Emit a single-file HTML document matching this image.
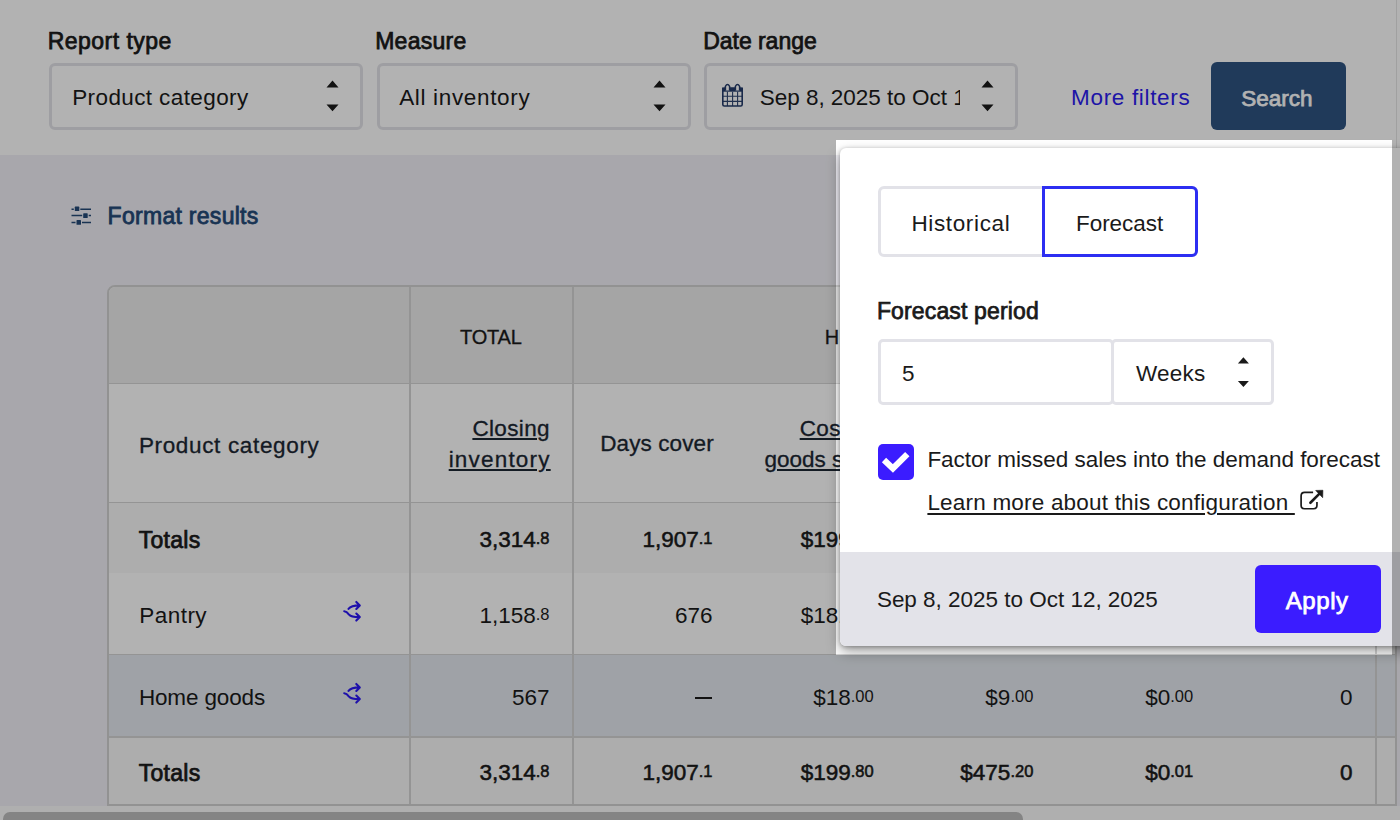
<!DOCTYPE html>
<html><head><meta charset="utf-8"><style>
html,body{margin:0;padding:0;width:1400px;height:820px;overflow:hidden;background:#fff}
body{position:relative;font-family:"Liberation Sans",sans-serif}
.t{position:absolute;white-space:nowrap}
.sel{position:absolute;box-sizing:border-box;border:3px solid #e3e3e8;border-radius:6px;background:#fff}
.num{position:absolute;white-space:nowrap;font-size:22.5px;line-height:22.5px;color:#1a1a1a;text-align:right}
.num .sm{font-size:16.5px;position:relative;top:-3px}
.num.b{-webkit-text-stroke:0.55px #1a1a1a}
.ov{position:absolute;left:836px;top:140px;width:556px;height:515px;box-shadow:0 0 0 2000px rgba(0,0,0,.3);pointer-events:none}
</style></head><body>
<div style="position:absolute;left:0;top:0;width:1400px;height:155px;background:#fff"></div>
<div style="position:absolute;left:1396px;top:0;width:1px;height:155px;background:#e6e6e6"></div>
<div class="t" style="left:47.70px;top:30.03px;font-size:23px;line-height:23px;font-weight:normal;color:#1a1a1a;letter-spacing:0.480px;;-webkit-text-stroke:0.75px #1a1a1a">Report type</div>
<div class="t" style="left:375.20px;top:30.03px;font-size:23px;line-height:23px;font-weight:normal;color:#1a1a1a;letter-spacing:0.250px;;-webkit-text-stroke:0.75px #1a1a1a">Measure</div>
<div class="t" style="left:703.20px;top:30.03px;font-size:23px;line-height:23px;font-weight:normal;color:#1a1a1a;letter-spacing:-0.033px;;-webkit-text-stroke:0.75px #1a1a1a">Date range</div>
<div class="sel" style="left:48.5px;top:62.5px;width:314.5px;height:67.0px"></div>
<div class="sel" style="left:376.5px;top:62.5px;width:314.0px;height:67.0px"></div>
<div class="sel" style="left:703.5px;top:62.5px;width:314.5px;height:67.0px"></div>
<div class="t" style="left:72.20px;top:86.95px;font-size:22.5px;line-height:22.5px;font-weight:normal;color:#1a1a1a;letter-spacing:0.393px;">Product category</div>
<div class="t" style="left:399.20px;top:86.95px;font-size:22.5px;line-height:22.5px;font-weight:normal;color:#1a1a1a;letter-spacing:0.658px;">All inventory</div>
<div style="position:absolute;left:755px;top:80px;width:205px;height:36px;overflow:hidden">
<div class="t" style="left:4.70px;top:6.95px;font-size:22.5px;line-height:22.5px;font-weight:normal;color:#1a1a1a;letter-spacing:-0.019px;">Sep 8, 2025 to Oct 12, 2025</div>
</div>
<svg style="position:absolute;left:0;top:0" width="1400" height="820"><path d="M326.5,87.4 L332.5,80.6 L338.5,87.4 Z M326.5,104.6 L332.5,111.2 L338.5,104.6 Z" fill="#1a1a1a"/></svg>
<svg style="position:absolute;left:0;top:0" width="1400" height="820"><path d="M653.5,87.4 L659.5,80.6 L665.5,87.4 Z M653.5,104.6 L659.5,111.2 L665.5,104.6 Z" fill="#1a1a1a"/></svg>
<svg style="position:absolute;left:0;top:0" width="1400" height="820"><path d="M981.5,87.4 L987.5,80.6 L993.5,87.4 Z M981.5,104.6 L987.5,111.2 L993.5,104.6 Z" fill="#1a1a1a"/></svg>
<svg style="position:absolute;left:720px;top:82px" width="26" height="28" viewBox="0 0 26 28">
<path d="M2.8,14.3 H22.2 M2.8,19.4 H22.2 M7.4,9.7 V24 M12.6,9.7 V24 M17.6,9.7 V24" stroke="#2f4670" stroke-width="1.1" fill="none"/>
<rect x="2.8" y="6.3" width="19.4" height="17.7" rx="1.5" fill="none" stroke="#243c6b" stroke-width="1.6"/>
<rect x="2" y="5.5" width="21" height="4.2" fill="#243c6b"/>
<path d="M5.4,8.5 V4.3 Q7.5,0.8 9.6,4.3 V8.5 M15.4,8.5 V4.3 Q17.5,0.8 19.6,4.3 V8.5" stroke="#243c6b" stroke-width="1.5" fill="#fff"/>
</svg>
<div class="t" style="left:1071.10px;top:87.35px;font-size:22.5px;line-height:22.5px;font-weight:normal;color:#2b1cf0;letter-spacing:0.664px;">More filters</div>
<div style="position:absolute;left:1210.5px;top:62px;width:135px;height:68px;background:#2f5481;border-radius:6px"></div>
<div class="t" style="left:1241.30px;top:87.75px;font-size:22.5px;line-height:22.5px;font-weight:normal;color:#fff;letter-spacing:-0.020px;;-webkit-text-stroke:0.75px #fff">Search</div>
<div style="position:absolute;left:0;top:155px;width:1400px;height:651px;background:#f1f0f6"></div>
<div style="position:absolute;left:0;top:806px;width:1400px;height:14px;background:#fbfbfb"></div>
<div style="position:absolute;left:3px;top:812px;width:1020px;height:14px;background:#bdbdbd;border-radius:7px"></div>
<svg style="position:absolute;left:70px;top:205px" width="24" height="22" viewBox="0 0 24 22">
<path d="M1.5,4.2 H3.8 M10.3,4.2 H21 M1.5,10.6 H12.2 M18.7,10.6 H21 M1.5,17.5 H5.5 M12,17.5 H21" stroke="#244a78" stroke-width="1.5"/>
<rect x="4.8" y="1.6" width="4.5" height="4.5" rx="0.6" fill="#244a78"/>
<rect x="13.2" y="8.3" width="4.5" height="4.7" rx="0.6" fill="#244a78"/>
<rect x="6.5" y="15.1" width="4.5" height="4.7" rx="0.6" fill="#244a78"/>
</svg>
<div class="t" style="left:107.60px;top:204.63px;font-size:23px;line-height:23px;font-weight:normal;color:#244a78;letter-spacing:0.285px;;-webkit-text-stroke:0.8px #244a78">Format results</div>
<div style="position:absolute;left:107px;top:285.2px;width:1289.5px;height:520.8px;border-radius:8px 8px 0 0;overflow:hidden;background:#fff;box-sizing:border-box;border:2px solid #d2d2d2">
<div style="position:absolute;left:0;top:-1.1999999999999886px;width:1289.5px;height:98px;background:#ececec"></div>
<div style="position:absolute;left:0;top:96.80000000000001px;width:1289.5px;height:119px;background:#ffffff"></div>
<div style="position:absolute;left:0;top:215.8px;width:1289.5px;height:70.20000000000005px;background:#f8f8f8"></div>
<div style="position:absolute;left:0;top:286.00000000000006px;width:1289.5px;height:81.79999999999995px;background:#ffffff"></div>
<div style="position:absolute;left:0;top:367.8px;width:1289.5px;height:82px;background:#e4e9ef"></div>
<div style="position:absolute;left:0;top:449.8px;width:1289.5px;height:69px;background:#f8f8f8"></div>
<div style="position:absolute;left:-2px;top:95.55000000000001px;width:1289.5px;height:1.5px;background:#d4d4d4"></div>
<div style="position:absolute;left:-2px;top:214.75px;width:1289.5px;height:1.5px;background:#d4d4d4"></div>
<div style="position:absolute;left:-2px;top:366.75000000000006px;width:1289.5px;height:1.5px;background:#d4d4d4"></div>
<div style="position:absolute;left:-2px;top:448.84999999999997px;width:1289.5px;height:1.5px;background:#d4d4d4"></div>
<div style="position:absolute;left:300.0px;top:-2.0px;width:2px;height:520.8px;background:#d4d4d4"></div>
<div style="position:absolute;left:462.79999999999995px;top:-2.0px;width:2px;height:520.8px;background:#d4d4d4"></div>
<div style="position:absolute;left:1266.2px;top:-2.0px;width:2px;height:520.8px;background:#d4d4d4"></div>
</div>
<div class="t" style="left:460.10px;top:326.67px;font-size:20px;line-height:20px;font-weight:normal;color:#1a1a1a;letter-spacing:-0.225px;;-webkit-text-stroke:0.3px #1a1a1a">TOTAL</div>
<div class="t" style="left:824.70px;top:326.67px;font-size:20px;line-height:20px;font-weight:normal;color:#1a1a1a;letter-spacing:1.478px;;-webkit-text-stroke:0.3px #1a1a1a">HISTORICAL</div>
<div class="t" style="left:138.90px;top:434.65px;font-size:22.5px;line-height:22.5px;font-weight:normal;color:#1c2733;letter-spacing:0.653px;;-webkit-text-stroke:0.3px #1c2733">Product category</div>
<div class="t" style="left:472.40px;top:418.25px;font-size:22.5px;line-height:22.5px;font-weight:normal;color:#1c2733;letter-spacing:0.350px;text-decoration:underline;text-underline-offset:2px;-webkit-text-stroke:0.3px #1c2733">Closing</div>
<div class="t" style="left:448.70px;top:448.95px;font-size:22.5px;line-height:22.5px;font-weight:normal;color:#1c2733;letter-spacing:1.187px;text-decoration:underline;text-underline-offset:2px;-webkit-text-stroke:0.3px #1c2733">inventory</div>
<div class="t" style="left:600.20px;top:433.45px;font-size:22.5px;line-height:22.5px;font-weight:normal;color:#1c2733;letter-spacing:0.111px;;-webkit-text-stroke:0.3px #1c2733">Days cover</div>
<div class="t" style="left:799.70px;top:418.25px;font-size:22.5px;line-height:22.5px;font-weight:normal;color:#1c2733;letter-spacing:0.400px;text-decoration:underline;text-underline-offset:2px;-webkit-text-stroke:0.3px #1c2733">Cost of</div>
<div class="t" style="left:764.40px;top:448.95px;font-size:22.5px;line-height:22.5px;font-weight:normal;color:#1c2733;letter-spacing:0.022px;text-decoration:underline;text-underline-offset:2px;-webkit-text-stroke:0.3px #1c2733">goods sold</div>
<div class="t" style="left:138.70px;top:529.03px;font-size:23px;line-height:23px;font-weight:normal;color:#1a1a1a;letter-spacing:0.300px;;-webkit-text-stroke:0.75px #1a1a1a">Totals</div>
<div class="num b" style="right:850.50px;top:529.25px">3,314<span class="sm">.8</span></div>
<div class="num b" style="right:687.50px;top:529.25px">1,907<span class="sm">.1</span></div>
<div class="num b" style="right:526.30px;top:529.25px">$199<span class="sm">.80</span></div>
<div class="t" style="left:139.30px;top:604.95px;font-size:22.5px;line-height:22.5px;font-weight:normal;color:#1a1a1a;letter-spacing:0.460px;">Pantry</div>
<div class="num" style="right:850.50px;top:604.95px">1,158<span class="sm">.8</span></div>
<div class="num" style="right:687.50px;top:604.95px">676</div>
<div class="num" style="right:526.30px;top:604.95px">$181<span class="sm">.80</span></div>
<div class="t" style="left:138.90px;top:686.85px;font-size:22.5px;line-height:22.5px;font-weight:normal;color:#1a1a1a;letter-spacing:-0.144px;">Home goods</div>
<div class="num" style="right:850.50px;top:686.85px">567</div>
<div style="position:absolute;left:694.5px;top:696.8px;width:17px;height:2px;background:#1a1a1a"></div>
<div class="num" style="right:526.30px;top:686.85px">$18<span class="sm">.00</span></div>
<div class="num" style="right:366.70px;top:686.85px">$9<span class="sm">.00</span></div>
<div class="num" style="right:206.90px;top:686.85px">$0<span class="sm">.00</span></div>
<div class="num" style="right:47.40px;top:686.85px">0</div>
<div class="t" style="left:138.70px;top:761.83px;font-size:23px;line-height:23px;font-weight:normal;color:#1a1a1a;letter-spacing:0.300px;;-webkit-text-stroke:0.75px #1a1a1a">Totals</div>
<div class="num b" style="right:850.50px;top:762.25px">3,314<span class="sm">.8</span></div>
<div class="num b" style="right:687.50px;top:762.25px">1,907<span class="sm">.1</span></div>
<div class="num b" style="right:526.30px;top:762.25px">$199<span class="sm">.80</span></div>
<div class="num b" style="right:366.70px;top:762.25px">$475<span class="sm">.20</span></div>
<div class="num b" style="right:206.90px;top:762.25px">$0<span class="sm">.01</span></div>
<div class="num b" style="right:47.40px;top:762.25px">0</div>
<svg style="position:absolute;left:336px;top:596px" width="32" height="32" viewBox="0 0 32 32">
<path d="M12.5,12.9 C14.5,10.3 17,9.4 23.5,9.4 M20.3,5.9 L23.8,9.4 L20.3,12.9 M8.2,15.2 C10.5,15.4 11.3,16.2 12.8,18.3 C14.5,20.5 16.5,21.1 23.5,21.1 M20.3,17.6 L23.8,21.1 L20.3,24.6" fill="none" stroke="#2b17f5" stroke-width="2.1" stroke-linecap="round" stroke-linejoin="round"/>
</svg>
<svg style="position:absolute;left:336px;top:678px" width="32" height="32" viewBox="0 0 32 32">
<path d="M12.5,12.9 C14.5,10.3 17,9.4 23.5,9.4 M20.3,5.9 L23.8,9.4 L20.3,12.9 M8.2,15.2 C10.5,15.4 11.3,16.2 12.8,18.3 C14.5,20.5 16.5,21.1 23.5,21.1 M20.3,17.6 L23.8,21.1 L20.3,24.6" fill="none" stroke="#2b17f5" stroke-width="2.1" stroke-linecap="round" stroke-linejoin="round"/>
</svg>
<div style="position:absolute;left:840px;top:148px;width:580px;height:498px;background:#fff;border-radius:6px;box-shadow:0 1px 4px rgba(0,0,0,.3), 0 6px 14px rgba(0,0,0,.35);overflow:hidden">
<div style="position:absolute;left:0;top:404px;width:580px;height:94px;background:#e3e3e9"></div>
</div>
<div style="position:absolute;left:878px;top:186px;width:320px;height:71px;box-sizing:border-box;border:3px solid #e2e2e8;border-radius:6px"></div>
<div style="position:absolute;left:1041.5px;top:186px;width:156.5px;height:71px;box-sizing:border-box;border:3px solid #2d2ef2;border-radius:0 6px 6px 0"></div>
<div class="t" style="left:911.40px;top:213.15px;font-size:22.5px;line-height:22.5px;font-weight:normal;color:#1a1a1a;letter-spacing:0.644px;">Historical</div>
<div class="t" style="left:1076.00px;top:213.15px;font-size:22.5px;line-height:22.5px;font-weight:normal;color:#1a1a1a;letter-spacing:-0.057px;">Forecast</div>
<div class="t" style="left:876.90px;top:299.53px;font-size:23px;line-height:23px;font-weight:normal;color:#1a1a1a;letter-spacing:0.150px;;-webkit-text-stroke:0.75px #1a1a1a">Forecast period</div>
<div style="position:absolute;left:878px;top:339px;width:236px;height:66px;box-sizing:border-box;border:3px solid #e2e2e8;border-radius:5px"></div>
<div style="position:absolute;left:1111px;top:339px;width:162.5px;height:66px;box-sizing:border-box;border:3px solid #e2e2e8;border-radius:5px"></div>
<div class="t" style="left:902.10px;top:362.85px;font-size:22.5px;line-height:22.5px;font-weight:normal;color:#1a1a1a;letter-spacing:0.000px;">5</div>
<div class="t" style="left:1135.90px;top:362.85px;font-size:22.5px;line-height:22.5px;font-weight:normal;color:#1a1a1a;letter-spacing:0.275px;">Weeks</div>
<svg style="position:absolute;left:0;top:0" width="1400" height="820"><path d="M1237.9,363.5 L1243.4,357.3 L1248.9,363.5 Z M1237.9,380.9 L1243.4,387.1 L1248.9,380.9 Z" fill="#1a1a1a"/></svg>
<div style="position:absolute;left:878.2px;top:443.7px;width:36.1px;height:36.1px;background:#3b1cff;border-radius:5px"></div>
<svg style="position:absolute;left:878.2px;top:443.7px" width="37" height="37" viewBox="0 0 37 37"><path d="M6,16 L14.9,24.4 L29.3,10.1" fill="none" stroke="#fff" stroke-width="6.2" stroke-linejoin="miter"/></svg>
<div class="t" style="left:927.40px;top:449.05px;font-size:22.5px;line-height:22.5px;font-weight:normal;color:#1a1a1a;letter-spacing:-0.033px;">Factor missed sales into the demand forecast</div>
<div class="t" style="left:927.40px;top:491.65px;font-size:22.5px;line-height:22.5px;font-weight:normal;color:#1a1a1a;letter-spacing:0.200px;text-decoration:underline;text-underline-offset:3px;text-decoration-thickness:1.8px">Learn more about this configuration </div>
<svg style="position:absolute;left:1298px;top:488px" width="28" height="24" viewBox="0 0 28 24">
<path d="M15.1,4.45 H6.6 Q3.1,4.45 3.1,7.95 V17.25 Q3.1,20.75 6.6,20.75 H15.45 Q18.95,20.75 18.95,17.25 V14" fill="none" stroke="#1a1a1a" stroke-width="1.7"/>
<path d="M12.4,14.75 L21.5,5.7" stroke="#1a1a1a" stroke-width="2.6" stroke-linecap="round"/>
<path d="M17.7,2.45 L24.9,2.25 L24.7,9.7 Z" fill="#1a1a1a" stroke="#1a1a1a" stroke-width="0.6" stroke-linejoin="round"/>
</svg>
<div class="t" style="left:876.90px;top:588.75px;font-size:22.5px;line-height:22.5px;font-weight:normal;color:#1a1a1a;letter-spacing:-0.019px;">Sep 8, 2025 to Oct 12, 2025</div>
<div style="position:absolute;left:1255px;top:565px;width:126px;height:68px;background:#3b1cff;border-radius:6px"></div>
<div class="t" style="left:1285.80px;top:589.38px;font-size:24px;line-height:24px;font-weight:normal;color:#fff;letter-spacing:0.550px;;-webkit-text-stroke:0.75px #fff">Apply</div>
<div class="ov"></div>
</body></html>
